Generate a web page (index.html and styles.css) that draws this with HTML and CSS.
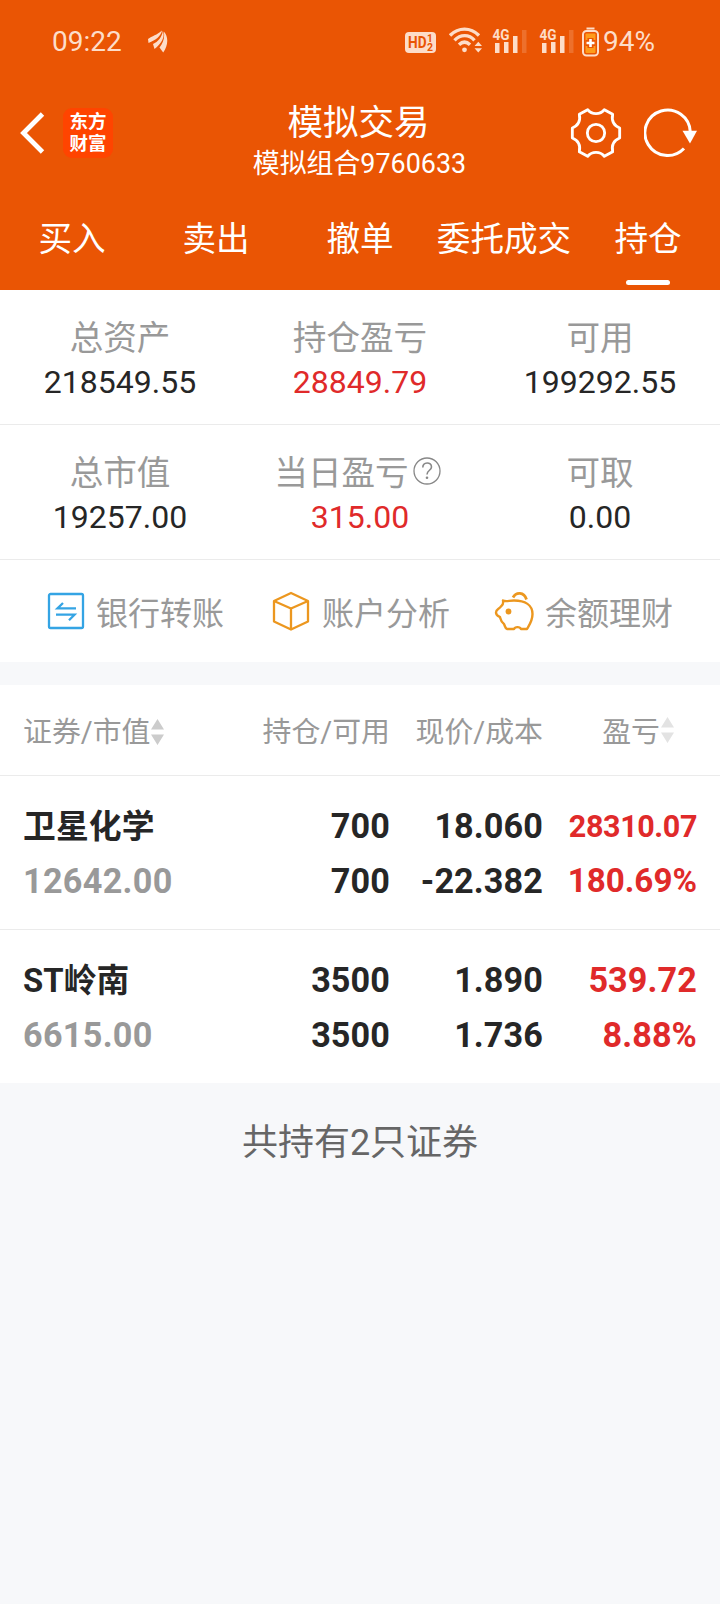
FILE: index.html
```
<!DOCTYPE html>
<html lang="zh-CN">
<head>
    <meta charset="UTF-8">
    <meta name="viewport" content="width=device-width, initial-scale=1.0">
    <title>模拟交易</title>
    <link rel="stylesheet" href="styles.css">
</head>
<body>
    <header class="header">
        <div class="status">
            <span class="time">09:22</span>
            <svg class="notice" width="20" height="23" viewBox="0 0 20 23">
                <path d="M0 9C4 6 9 5 14 0.500C13 6 8 10 0.500 13ZM5 14C10 12 14 7 14.800 1C17.500 7 13 14 6.500 19ZM11.500 17.500C15 13 17 8 15.800 1.500C21 7 20 16 15.200 22.500Z"/>
            </svg>
            <div class="status-icons">
                <svg class="hd" width="31" height="21" viewBox="0 0 31 21">
                    <rect width="31" height="21" rx="4" fill="#fdddc9"/>
                    <text x="3" y="16.200" font-size="16" font-weight="700" textLength="18.500" lengthAdjust="spacingAndGlyphs">HD</text>
                    <text x="22" y="10" font-size="10" font-weight="700">1</text>
                    <text x="22" y="18.800" font-size="10.500" font-weight="700">2</text>
                </svg>
                <svg class="wifi" width="34" height="26" viewBox="0 0 34 26">
                    <g fill="none" stroke="#fdddc9" stroke-width="3.4">
                        <path d="M1 8.500C9.500 0 21.500 0 30 8.500"/>
                        <path d="M5.500 13.300C11.500 7 20 7 25.500 13.300"/>
                        <path d="M10 17.800C13.500 14.400 17.500 14.400 21 17.800"/>
                    </g>
                    <circle cx="15.500" cy="22.800" r="2.400" fill="#fdddc9"/>
                    <path d="M25.500 19L29.300 14.800L33 19ZM25.500 21.300L29.300 25.500L33 21.300Z" fill="#fdddc9"/>
                </svg>
                <svg class="signal" width="35" height="30" viewBox="0 0 35 30">
                    <path d="M3 19H7.500V29H3ZM12 18H16.500V29H12ZM21 12H25.500V29H21Z" fill="#fdddc9"/>
                    <path d="M30 6H34.500V29H30Z" fill="#fff" opacity=".16"/>
                    <text x="0.500" y="16" font-size="15" font-weight="700" textLength="17" lengthAdjust="spacingAndGlyphs">4G</text>
                </svg>
                <svg class="signal" width="35" height="30" viewBox="0 0 35 30">
                    <path d="M3 19H7.500V29H3ZM12 18H16.500V29H12ZM21 12H25.500V29H21Z" fill="#fdddc9"/>
                    <path d="M30 6H34.500V29H30Z" fill="#fff" opacity=".16"/>
                    <text x="0.500" y="16" font-size="15" font-weight="700" textLength="17" lengthAdjust="spacingAndGlyphs">4G</text>
                </svg>
                <svg class="battery" width="17" height="30" viewBox="0 0 17 30">
                    <path d="M4.500 1.500H12.500" stroke="#fdddc9" stroke-width="2"/>
                    <rect x="1" y="4" width="15" height="24.500" rx="3.500" fill="none" stroke="#fdddc9" stroke-width="2"/>
                    <rect x="3.500" y="6.500" width="10" height="19.500" rx="1" fill="#ff9c1a"/>
                    <path d="M8.500 11V21M3.500 16H13.500" stroke="#ea5504" stroke-width="6"/>
                    <path d="M8.500 12V20M4.500 16H12.500" stroke="#fff" stroke-width="2.600"/>
                </svg>
            </div>
            <span class="percent">94%</span>
        </div>

        <div class="nav">
            <div class="nav-side">
                <svg class="back" width="26" height="44" viewBox="0 0 26 44">
                    <path d="M23.500 3L4.500 22L23.500 41" fill="none" stroke="#fff" stroke-width="4.800"/>
                </svg>
                <div class="logo">东方<br>财富</div>
            </div>
            <div class="nav-title">
                <h1>模拟交易</h1>
                <p>模拟组合9760633</p>
            </div>
            <div class="nav-side right">
                <svg width="52" height="52" viewBox="-78 -78 156 156">
                    <g fill="none" stroke="#fff" stroke-width="8.500" stroke-linejoin="round">
                        <path d="M25 -70L50 -56C46 -36 54 -22 71 -15V15C54 22 46 36 50 56L25 70C13 54 -13 54 -25 70L-50 56C-46 36 -54 22 -71 15V-15C-54 -22 -46 -36 -50 -56L-25 -70C-13 -54 13 -54 25 -70Z"/>
                        <circle r="26"/>
                    </g>
                </svg>
                <svg width="54" height="52" viewBox="0 0 54 52">
                    <path d="M46.300 25A22.700 22.700 0 1 0 40 41.500" fill="none" stroke="#fff" stroke-width="3"/>
                    <path d="M38.500 23.700H53L46 36.500Z" fill="#fff"/>
                </svg>
            </div>
        </div>

        <nav class="tabs">
            <a>买入</a>
            <a>卖出</a>
            <a>撤单</a>
            <a>委托成交</a>
            <a class="active">持仓</a>
        </nav>
    </header>

    <section class="assets">
        <div class="asset">
            <div class="label">总资产</div>
            <div class="value">218549.55</div>
        </div>
        <div class="asset">
            <div class="label">持仓盈亏</div>
            <div class="value red">28849.79</div>
        </div>
        <div class="asset">
            <div class="label">可用</div>
            <div class="value">199292.55</div>
        </div>
    </section>
    <section class="assets">
        <div class="asset">
            <div class="label">总市值</div>
            <div class="value">19257.00</div>
        </div>
        <div class="asset">
            <div class="label with-help">当日盈亏
                <svg class="help" width="28" height="28" viewBox="0 0 28 28">
                    <g fill="none" stroke="#888">
                        <circle cx="14" cy="14" r="13" stroke-width="1.300"/>
                        <path d="M9.800 10.500C9.800 4.500 18.500 4.500 18.500 10C18.500 13.300 14 13.300 14 17.500" stroke-width="1.600"/>
                    </g>
                    <circle cx="14" cy="20.800" r="1.300" fill="#888"/>
                </svg>
            </div>
            <div class="value red">315.00</div>
        </div>
        <div class="asset">
            <div class="label">可取</div>
            <div class="value">0.00</div>
        </div>
    </section>

    <section class="links">
        <a class="link">
            <svg width="38" height="40" viewBox="0 0 38 40">
                <g fill="none" stroke="#34a4e4" stroke-width="2.300">
                    <rect x="2" y="3" width="34" height="34" rx="1.500"/>
                    <path d="M29 17.300H10.500L16 12M9 23.700H27.500L22 29.200"/>
                </g>
            </svg>
            银行转账
        </a>
        <a class="link">
            <svg width="38" height="40" viewBox="0 0 38 40">
                <path d="M19 2L36 10V30.500L19 38.500L2 30.500V10ZM2 10L19 17.500L36 10M19 17.500V38.500" fill="none" stroke="#ec971f" stroke-width="2.300" stroke-linejoin="round"/>
            </svg>
            账户分析
        </a>
        <a class="link">
            <svg width="40" height="40" viewBox="0 0 40 40">
                <g fill="none" stroke="#ec971f" stroke-width="2.400" stroke-linejoin="round">
                    <path d="M9 9.500C12 11 15 9.500 20 9.500C31 9.500 38.500 14 38.500 23C38.500 30 35 34.500 33 38H27C26 35.500 21 35.500 20 38H13C11 37 11 35 10 33C7 31 7 30 6 26C4 25 2 24.500 2 21.500C2 18.500 4 18.500 6 16.500C8 14 10 14 9 9.500Z"/>
                    <path d="M19 6.500C22 1 30 0.500 32.500 8.500" stroke-width="2.800"/>
                </g>
                <circle cx="14.500" cy="20.500" r="2.900" fill="#ec971f"/>
            </svg>
            余额理财
        </a>
    </section>

    <main class="holdings">
        <div class="row head">
            <div class="cell">证券/市值<svg class="sort" width="13" height="26" viewBox="0 0 13 26"><path d="M0 10.500L6.500 0L13 10.500ZM0 15.500L6.500 26L13 15.500Z" fill="#ccc"/></svg></div>
            <div class="cell">持仓/可用</div>
            <div class="cell">现价/成本</div>
            <div class="cell profit">盈亏<svg class="sort" width="13" height="26" viewBox="0 0 13 26"><path d="M0 10.500L6.500 0L13 10.500ZM0 15.500L6.500 26L13 15.500Z" fill="#e3e3e3"/></svg></div>
        </div>
        <div class="row">
            <div class="cell"><b class="name">卫星化学</b><b class="gray">12642.00</b></div>
            <div class="cell"><b>700</b><b>700</b></div>
            <div class="cell"><b>18.060</b><b>-22.382</b></div>
            <div class="cell red"><b class="small">28310.07</b><b class="mid">180.69%</b></div>
        </div>
        <div class="row">
            <div class="cell"><b class="name">ST岭南</b><b class="gray">6615.00</b></div>
            <div class="cell"><b>3500</b><b>3500</b></div>
            <div class="cell"><b>1.890</b><b>1.736</b></div>
            <div class="cell red"><b>539.72</b><b>8.88%</b></div>
        </div>
    </main>

    <p class="total">共持有2只证券</p>
</body>
</html>
```
FILE: styles.css
```
* {
    box-sizing: border-box;
}

body {
    margin: 0;
    min-height: 1604px;
    background: #f7f8fa;
    color: #262626;
    font-family: Roboto, "Noto Sans CJK SC", sans-serif;
}

svg {
    display: block;
    flex: none;
}

.header {
    height: 290px;
    background: #ea5504;
    color: #fff;
}

/* 状态栏 */
.status {
    display: flex;
    align-items: center;
    height: 83px;
    padding-left: 52px;
    color: #fdddc9;
    font-size: 28px;
}

.time {
    width: 96px;
}

.notice {
    fill: #fdddc9;
}

.status-icons {
    display: flex;
    align-items: center;
    margin-left: 237px;
}

.status-icons text {
    font-family: Roboto, sans-serif;
    fill: #fdddc9;
}

.status-icons .hd text {
    fill: #ea5504;
}

.hd {
    margin-top: 1px;
}

.wifi {
    margin: 0 9px 4px 13px;
}

.signal {
    margin: 0 12px 5px 0;
}

.battery {
    margin-left: -4px;
}

.percent {
    margin-left: 4px;
}

/* 导航栏 */
.nav {
    display: grid;
    grid-template-columns: 180px 1fr 180px;
    height: 100px;
}

.nav-side {
    display: flex;
    align-items: center;
    padding-left: 19px;
}

.nav-side.right {
    gap: 22px;
    padding-left: 30px;
}

.logo {
    width: 50px;
    height: 50px;
    margin-left: 18px;
    padding-top: 3px;
    border-radius: 9px;
    background: #ff4400;
    font-size: 18.5px;
    font-weight: 700;
    line-height: 22px;
    text-align: center;
}

.nav-title {
    padding-top: 18px;
    text-align: center;
}

.nav-title h1 {
    margin: 0 3px 0 0;
    font-size: 35.5px;
    font-weight: 400;
    line-height: 44px;
}

.nav-title p {
    margin: 0 1px 0 0;
    font-size: 26.9px;
    line-height: 38px;
}

.tabs {
    display: grid;
    grid-template-columns: repeat(5, 1fr);
    height: 107px;
    font-size: 33.6px;
    line-height: 114px;
    text-align: center;
}

.tabs a {
    position: relative;
}

.tabs .active::after {
    content: "";
    position: absolute;
    left: 50px;
    top: 97px;
    width: 44px;
    height: 5px;
    border-radius: 3px;
    background: #fff;
}

/* 资产概览 */
.assets {
    display: grid;
    grid-template-columns: repeat(3, 1fr);
    height: 135px;
    padding-top: 26px;
    border-bottom: 1px solid #ebebeb;
    background: #fff;
    text-align: center;
}

.label {
    height: 44px;
    color: #999;
    font-size: 33.6px;
    line-height: 46px;
}

.with-help {
    display: flex;
    justify-content: center;
    margin-left: -5px;
}

.help {
    margin: 6px 0 0 4px;
}

.value {
    font-size: 32px;
    line-height: 45px;
}

.red {
    color: #e02a2a;
}

.links {
    display: flex;
    justify-content: space-between;
    height: 102px;
    padding: 0 47px;
    background: #fff;
    color: #999;
    font-size: 32px;
}

.link {
    display: flex;
    align-items: center;
    gap: 11px;
}

.link:nth-child(2) {
    gap: 12px;
    margin-left: 4px;
}

/* 持仓列表 */
.holdings {
    margin-top: 23px;
    background: #fff;
}

.row {
    display: grid;
    grid-template-columns: 197px 170px 153px 154px;
    height: 154px;
    padding: 23px 0 0 23px;
    border-bottom: 1px solid #ebebeb;
    font-size: 34.2px;
    line-height: 55px;
    text-align: right;
}

.row:last-child {
    height: 153px;
    border-bottom: 0;
}

.row.head {
    height: 91px;
    padding-top: 0;
    color: #999;
    font-size: 28.9px;
    line-height: 94px;
}

.head .cell {
    display: flex;
    align-items: center;
    justify-content: flex-end;
}

.cell:first-child {
    justify-content: flex-start;
    text-align: left;
}

.head .profit {
    padding-right: 23px;
}

.sort {
    margin-left: 1px;
}

.profit .sort {
    margin-bottom: 4px;
}

.cell b {
    display: block;
    white-space: nowrap;
    letter-spacing: .1px;
}

.cell .name {
    height: 55px;
    font-size: 32.8px;
    line-height: 57px;
}

.cell .gray {
    color: #999;
    letter-spacing: .3px;
}

.cell .small {
    font-size: 30.5px;
    letter-spacing: -.4px;
}

.cell .mid {
    font-size: 33.2px;
    line-height: 54px;
    letter-spacing: 0;
}

.total {
    margin: 33px 0 0;
    color: #666;
    font-size: 36px;
    line-height: 54px;
    text-align: center;
}
```
